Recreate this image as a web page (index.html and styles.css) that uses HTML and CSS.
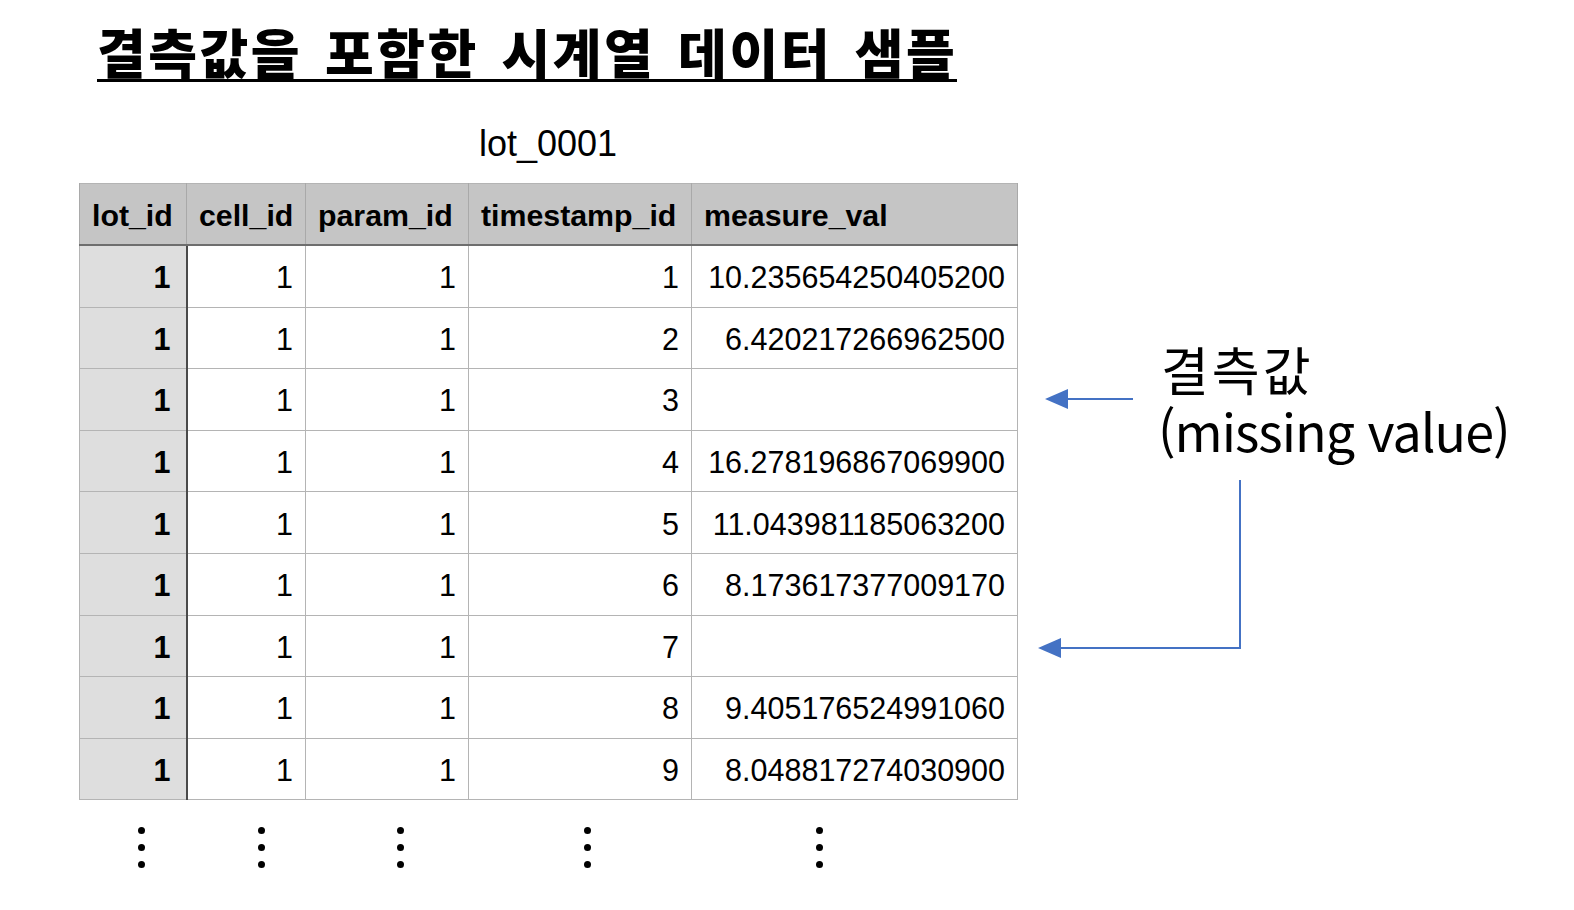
FILE: index.html
```html
<!DOCTYPE html>
<html lang="ko">
<head>
<meta charset="utf-8">
<title>결측값을 포함한 시계열 데이터 샘플</title>
<link rel="stylesheet" href="styles.css">
</head>
<body>
<div class="page">
  <h1 class="title">결측값을 포함한 시계열 데이터 샘플</h1>
  <div class="main">
    <div class="sheet">
      <div class="caption">lot_0001</div>
      <table class="grid">
        <colgroup>
          <col class="c1"><col class="c2"><col class="c3"><col class="c4"><col class="c5">
        </colgroup>
        <thead>
          <tr><th>lot_id</th><th>cell_id</th><th>param_id</th><th>timestamp_id</th><th>measure_val</th></tr>
        </thead>
        <tbody>
          <tr><td class="lot">1</td><td>1</td><td>1</td><td>1</td><td>10.235654250405200</td></tr>
          <tr><td class="lot">1</td><td>1</td><td>1</td><td>2</td><td>6.420217266962500</td></tr>
          <tr><td class="lot">1</td><td>1</td><td>1</td><td>3</td><td></td></tr>
          <tr><td class="lot">1</td><td>1</td><td>1</td><td>4</td><td>16.278196867069900</td></tr>
          <tr><td class="lot">1</td><td>1</td><td>1</td><td>5</td><td>11.043981185063200</td></tr>
          <tr><td class="lot">1</td><td>1</td><td>1</td><td>6</td><td>8.173617377009170</td></tr>
          <tr><td class="lot">1</td><td>1</td><td>1</td><td>7</td><td></td></tr>
          <tr><td class="lot">1</td><td>1</td><td>1</td><td>8</td><td>9.405176524991060</td></tr>
          <tr><td class="lot">1</td><td>1</td><td>1</td><td>9</td><td>8.048817274030900</td></tr>
        </tbody>
      </table>
      <div class="dots">
        <span class="vdots d1"><i></i><i></i><i></i></span>
        <span class="vdots d2"><i></i><i></i><i></i></span>
        <span class="vdots d3"><i></i><i></i><i></i></span>
        <span class="vdots d4"><i></i><i></i><i></i></span>
        <span class="vdots d5"><i></i><i></i><i></i></span>
      </div>
    </div>
    <div class="note">
      <div class="note-ko">결측값</div>
      <div class="note-en">(missing value)</div>
    </div>
  </div>
  <svg class="arrows" width="1574" height="910" viewBox="0 0 1574 910">
    <line x1="1133" y1="399" x2="1064" y2="399" stroke="#4472C4" stroke-width="2"/>
    <polygon points="1045,399 1068,389 1068,409" fill="#4472C4"/>
    <polyline points="1240,480 1240,648 1058,648" fill="none" stroke="#4472C4" stroke-width="2"/>
    <polygon points="1038,648 1061,638 1061,658" fill="#4472C4"/>
  </svg>
</div>
</body>
</html>
```

FILE: styles.css
```css
html, body {
  margin: 0;
  padding: 0;
  background: #ffffff;
}

.page {
  position: relative;
  width: 1574px;
  height: 910px;
  overflow: hidden;
  font-family: "Liberation Sans", Arial, sans-serif;
  color: #000;
}

.title {
  display: inline-block;
  margin: 23px 0 0 97px;
  font-family: "Noto Sans CJK KR", sans-serif;
  font-weight: 900;
  font-size: 53px;
  line-height: 56px;
  letter-spacing: 2.5px;
  word-spacing: 5.5px;
  border-bottom: 3px solid #000;
  white-space: nowrap;
}

.main {
  display: flex;
  align-items: flex-start;
}

.sheet {
  margin-left: 79px;
  width: 938px;
}

.caption {
  margin-top: 42px;
  height: 40px;
  line-height: 40px;
  font-size: 36px;
  text-align: center;
  margin-bottom: 19px;
}

.grid {
  border-collapse: collapse;
  table-layout: fixed;
  width: 938px;
  font-size: 30.5px;
  border: 1px solid #b4b4b4;
}

.c1 { width: 107px; }
.c2 { width: 119px; }
.c3 { width: 163px; }
.c4 { width: 223px; }
.c5 { width: 326px; }

.grid th {
  height: 57px;
  padding: 3px 0 0 12px;
  background: #c5c5c5;
  font-weight: 700;
  font-size: 30.3px;
  text-align: left;
  border-left: 1px solid #a9a9a9;
  border-right: 1px solid #a9a9a9;
  border-bottom: 2px solid #6e6e6e;
  white-space: nowrap;
}

.grid td {
  height: 57.6px;
  padding: 3px 12px 0 0;
  text-align: right;
  border: 1px solid #b4b4b4;
  white-space: nowrap;
}

.grid td.lot {
  background: #dedede;
  font-weight: 700;
  padding-right: 15px;
  border-right: 2px solid #4a4a4a;
}

.dots {
  height: 80px;
  display: flex;
}

.vdots {
  display: flex;
  flex-direction: column;
  gap: 10px;
  margin-top: 27px;
}

.vdots i {
  display: block;
  width: 7px;
  height: 7px;
  border-radius: 50%;
  background: #000;
}

.d1 { margin-left: 59px; }
.d2 { margin-left: 113px; }
.d3 { margin-left: 132px; }
.d4 { margin-left: 180px; }
.d5 { margin-left: 225px; }

.note {
  margin-left: 141px;
  margin-top: 256px;
  font-family: "Noto Sans CJK KR", sans-serif;
  font-size: 52px;
  line-height: 59px;
  white-space: nowrap;
}

.note-ko {
  line-height: 62px;
  letter-spacing: 3px;
  padding-left: 3px;
}

.note-en {
  letter-spacing: -1px;
}

.arrows {
  position: absolute;
  left: 0;
  top: 0;
  pointer-events: none;
}
```
